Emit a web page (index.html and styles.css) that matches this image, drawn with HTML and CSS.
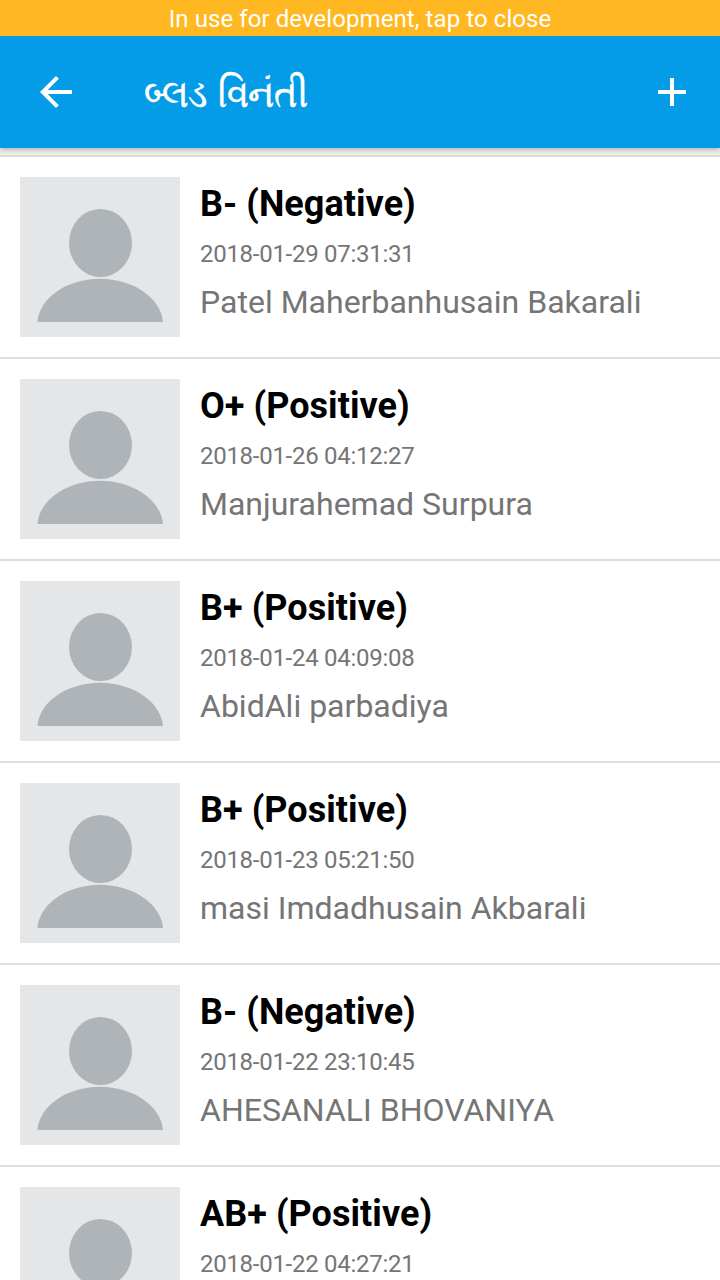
FILE: index.html
```
<!DOCTYPE html>
<html lang="gu">
<head>
    <meta charset="UTF-8">
    <meta name="viewport" content="width=device-width, initial-scale=1.0">
    <title>બ્લડ વિનંતી</title>
    <link rel="stylesheet" href="styles.css">
</head>
<body>
    <svg class="defs" width="0" height="0">
        <symbol id="avatar" viewBox="0 0 160 160">
            <rect width="160" height="160" fill="#e4e6e8"/>
            <ellipse cx="80.500" cy="66" rx="31.500" ry="34" fill="#aeb4b8"/>
            <path d="M17.500 145C19 121 47 101.700 80 101.700C113 101.700 141 121 143 145Z" fill="#aeb4b8"/>
        </symbol>
    </svg>
    <div class="banner">In use for development, tap to close</div>
    <header class="toolbar">
        <svg class="icon" viewBox="0 0 24 24"><path d="M20 11H7.830l5.590-5.590L12 4l-8 8 8 8 1.410-1.410L7.830 13H20v-2z"/></svg>
        <h1 class="title">બ્લડ વિનંતી</h1>
        <svg class="icon" viewBox="0 0 24 24"><path d="M19 13h-6v6h-2v-6H5v-2h6V5h2v6h6v2z"/></svg>
    </header>
    <ul class="list">
        <li class="row">
            <svg class="avatar"><use href="#avatar"/></svg>
            <div class="info">
                <div class="group">B- (Negative)</div>
                <div class="date">2018-01-29 07:31:31</div>
                <div class="name">Patel Maherbanhusain Bakarali</div>
            </div>
        </li>
        <li class="row">
            <svg class="avatar"><use href="#avatar"/></svg>
            <div class="info">
                <div class="group">O+ (Positive)</div>
                <div class="date">2018-01-26 04:12:27</div>
                <div class="name">Manjurahemad Surpura</div>
            </div>
        </li>
        <li class="row">
            <svg class="avatar"><use href="#avatar"/></svg>
            <div class="info">
                <div class="group">B+ (Positive)</div>
                <div class="date">2018-01-24 04:09:08</div>
                <div class="name">AbidAli parbadiya</div>
            </div>
        </li>
        <li class="row">
            <svg class="avatar"><use href="#avatar"/></svg>
            <div class="info">
                <div class="group">B+ (Positive)</div>
                <div class="date">2018-01-23 05:21:50</div>
                <div class="name">masi Imdadhusain Akbarali</div>
            </div>
        </li>
        <li class="row">
            <svg class="avatar"><use href="#avatar"/></svg>
            <div class="info">
                <div class="group">B- (Negative)</div>
                <div class="date">2018-01-22 23:10:45</div>
                <div class="name">AHESANALI BHOVANIYA</div>
            </div>
        </li>
        <li class="row">
            <svg class="avatar"><use href="#avatar"/></svg>
            <div class="info">
                <div class="group">AB+ (Positive)</div>
                <div class="date">2018-01-22 04:27:21</div>
            </div>
        </li>
    </ul>
</body>
</html>
```

FILE: styles.css
```
* {
    box-sizing: border-box;
}
body {
    display: flex;
    flex-direction: column;
    margin: 0;
    height: 1280px;
    overflow: hidden;
    background-color: #f2f0ee;
    font-family: Roboto, "Noto Sans", sans-serif;
}
.defs {
    display: block;
}
.banner {
    flex: none;
    height: 36px;
    background-color: #ffb822;
    color: #fff;
    font-size: 24px;
    letter-spacing: 0.08px;
    line-height: 38px;
    text-align: center;
}
.toolbar {
    display: flex;
    flex: none;
    align-items: center;
    height: 112px;
    padding: 0 24px 0 32px;
    background-color: #049be7;
    box-shadow: 0 2px 5px rgba(0, 0, 0, 0.25);
    clip-path: inset(0 0 -7px 0);
}
.icon {
    flex: none;
    width: 48px;
    height: 48px;
    fill: #fff;
}
.title {
    flex: 1;
    margin: 4px 0 0 64px;
    color: #fff;
    font-size: 39px;
    font-weight: 400;
    word-spacing: 3px;
    transform: scaleX(0.9);
    transform-origin: left;
    -webkit-text-stroke: 0.6px #fff;
}
.list {
    flex: 1;
    min-height: 0;
    margin: 7px 0 0;
    padding: 0;
    overflow: hidden;
    list-style: none;
    background-color: #fff;
    border-top: 2px solid #dcdad8;
}
.row {
    display: flex;
    height: 202px;
    padding: 20px;
    border-bottom: 2px solid #dedede;
}
.avatar {
    width: 160px;
    height: 160px;
    margin-right: 20px;
}
.group {
    margin-top: 5px;
    color: #000;
    font-size: 36px;
    font-weight: 700;
    letter-spacing: 0.05px;
    line-height: 44px;
}
.date {
    margin-top: 12px;
    color: #757575;
    font-size: 24px;
    letter-spacing: -0.28px;
    line-height: 32px;
}
.name {
    margin-top: 12px;
    color: #757575;
    font-size: 32px;
    letter-spacing: 0.01px;
    line-height: 40px;
}
```
